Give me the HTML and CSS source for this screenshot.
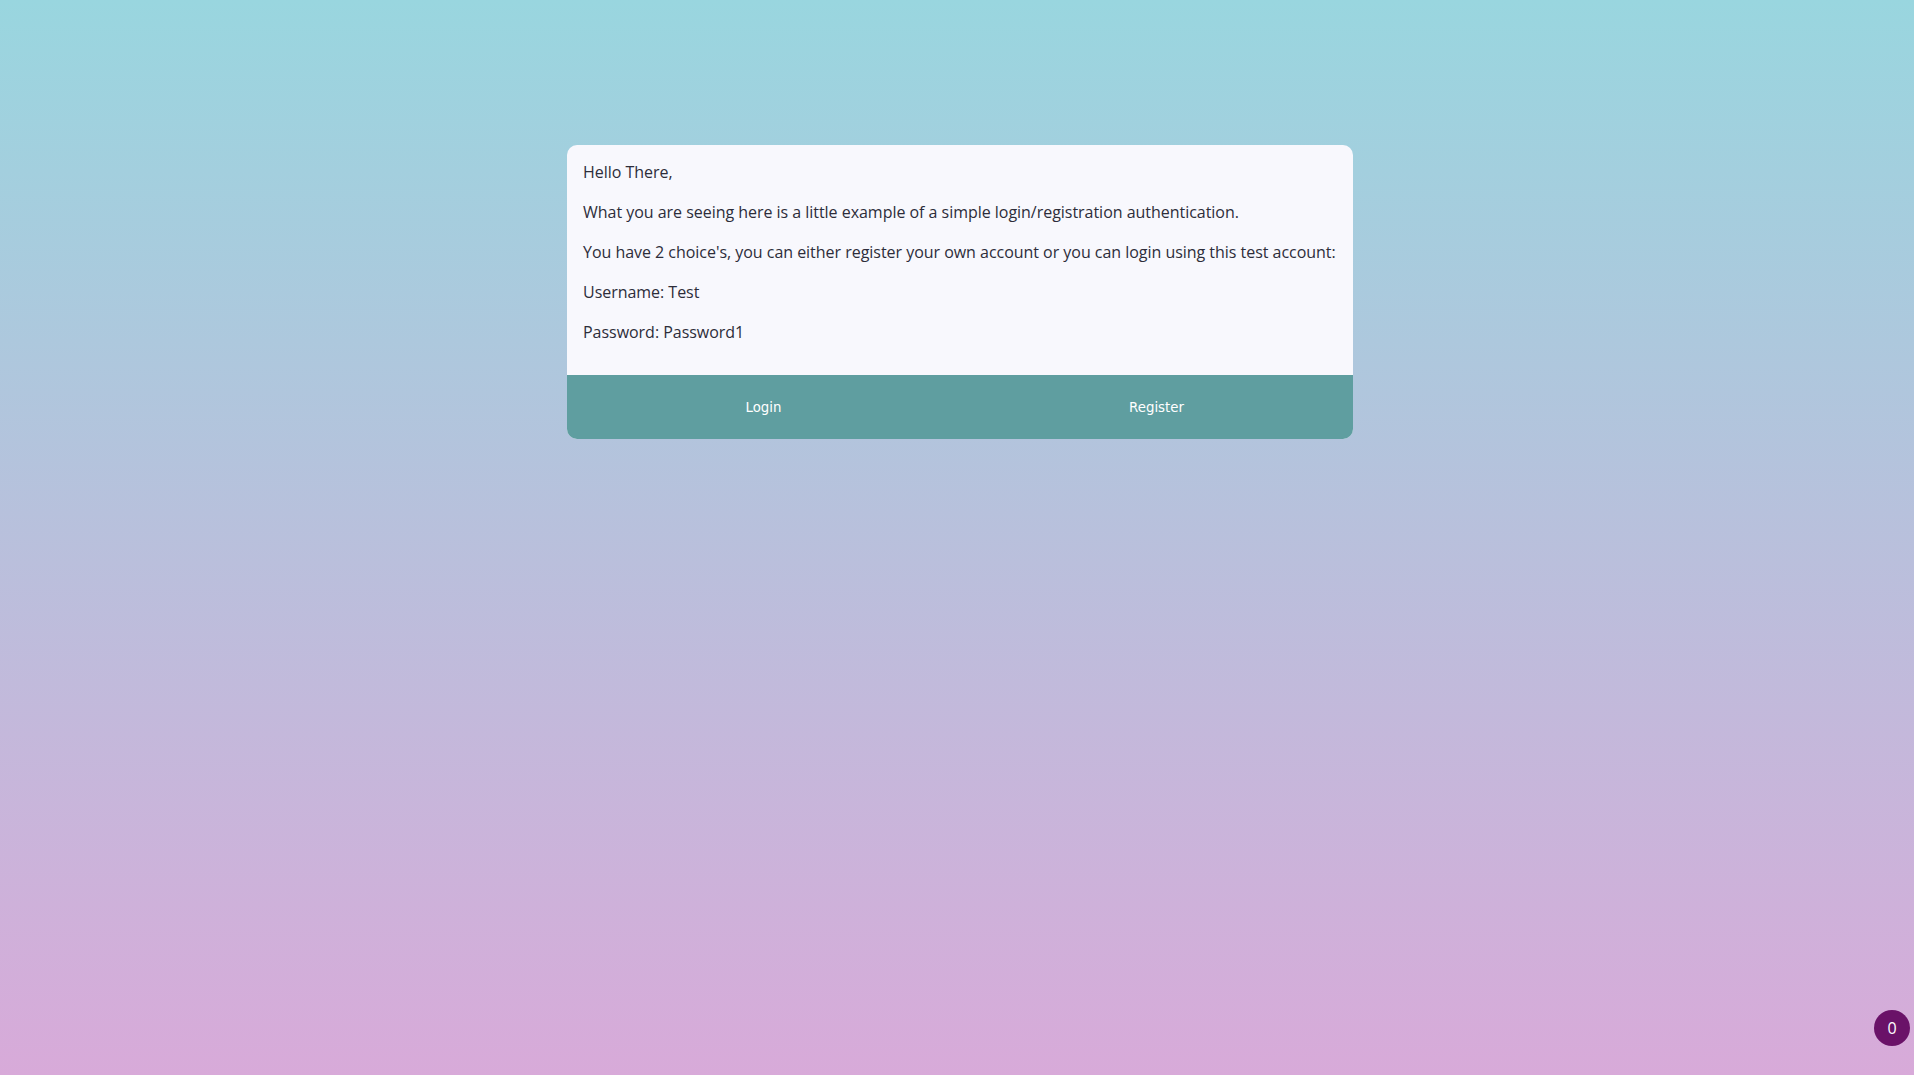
FILE: index.html
```html
<!DOCTYPE html>
<html lang="en">
<head>
<meta charset="utf-8">
<title>Auth</title>
<link rel="stylesheet" href="styles.css">
</head>
<body>
<main class="page">
  <section class="card">
    <div class="card-body">
      <p>Hello There,</p>
      <p>What you are seeing here is a little example of a simple login/registration authentication.</p>
      <p>You have 2 choice's, you can either register your own account or you can login using this test account:</p>
      <p>Username: Test</p>
      <p>Password: Password1</p>
    </div>
    <div class="card-actions">
      <button class="action">Login</button>
      <button class="action">Register</button>
    </div>
  </section>
</main>
<div class="badge">0</div>
</body>
</html>
```
FILE: styles.css
```css
html, body {
  margin: 0;
  height: 100%;
}
body {
  background: linear-gradient(to bottom, #99d6df 0%, #d8aad9 100%);
  font-family: "Open Sans", "Liberation Sans", sans-serif;
  color: #2d2d3a;
  overflow: hidden;
}
.page {
  display: flex;
  justify-content: center;
  padding: 145px 0 0 6px;
}
.card {
  width: 786px;
  background: #f8f8fd;
  border-radius: 10px;
  overflow: hidden;
}
.card-body {
  padding: 0 16px 15px;
}
.card-body p {
  margin: 16px 0;
  font-size: 16px;
  line-height: 24px;
  letter-spacing: -0.03px;
  white-space: nowrap;
}
.card-body p:first-child {
  margin-top: 15px;
}
.card-actions {
  display: flex;
  height: 64px;
  background: #5f9ea0;
}
.action {
  flex: 1;
  border: 0;
  background: transparent;
  color: #ffffff;
  font-family: "DejaVu Sans", sans-serif;
  font-size: 13.33px;
  cursor: pointer;
}
.badge {
  position: fixed;
  right: 4px;
  bottom: 29px;
  width: 36px;
  height: 36px;
  border-radius: 50%;
  background: #6a1268;
  color: #fff;
  font-family: "Open Sans", sans-serif;
  font-size: 16px;
  display: flex;
  align-items: center;
  justify-content: center;
}
```
